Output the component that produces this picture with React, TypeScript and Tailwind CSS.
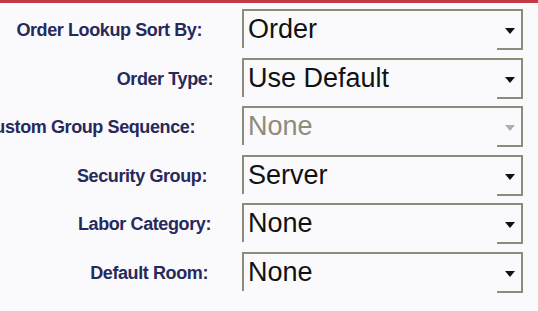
const rows = [
    { label: 'Order Lookup Sort By:', value: 'Order', pr: 'pr-[40px]' },
    { label: 'Order Type:', value: 'Use Default', pr: 'pr-[29px]' },
    { label: 'Custom Group Sequence:', value: 'None', pr: 'pr-[47px]', disabled: true },
    { label: 'Security Group:', value: 'Server', pr: 'pr-[35px]' },
    { label: 'Labor Category:', value: 'None', pr: 'pr-[31px]' },
    { label: 'Default Room:', value: 'None', pr: 'pr-[34px]' },
];

function Combo({ value, disabled }: { value: string; disabled?: boolean }) {
    return (
        <div className="relative flex h-[39px] w-[281px] items-center border-l-2 border-t-2 border-r-2 border-[#8c8c7c] pl-[4px]">
            <span
                className={`text-[27px] leading-none ${disabled ? 'text-[#8c8c7c]' : 'text-[#111]'}`}
                style={{ fontFamily: '"Liberation Sans", Arial, sans-serif' }}
            >
                {value}
            </span>
            <svg
                className="absolute right-[6px] top-[17px]"
                width="10"
                height="6"
                viewBox="0 0 10 6"
            >
                <path d="M0 0 H10 L5 6 Z" fill={disabled ? '#b0b0a4' : '#111'} />
            </svg>
            <div className="absolute -bottom-[2px] -right-[2px] h-[2px] w-[26px] bg-[#8c8c7c]" />
        </div>
    );
}

export default function App() {
    return (
        <div className="h-[311px] w-[538px] overflow-hidden bg-[#fafafd]">
            <div className="h-[3px] w-full bg-[#c23a44]" />
            <div className="flex flex-col gap-[9.6px] pt-[6px]">
                {rows.map((row) => (
                    <div key={row.label} className="flex items-center">
                        <div className={`flex w-[242px] shrink-0 justify-end whitespace-nowrap ${row.pr}`}>
                            <span
                                className="mt-[3px] text-[18px] font-bold leading-none tracking-[-0.4px] text-[#27295a]"
                                style={{ fontFamily: '"Liberation Sans", Arial, sans-serif' }}
                            >
                                {row.label}
                            </span>
                        </div>
                        <Combo value={row.value} disabled={row.disabled} />
                    </div>
                ))}
            </div>
        </div>
    );
}
